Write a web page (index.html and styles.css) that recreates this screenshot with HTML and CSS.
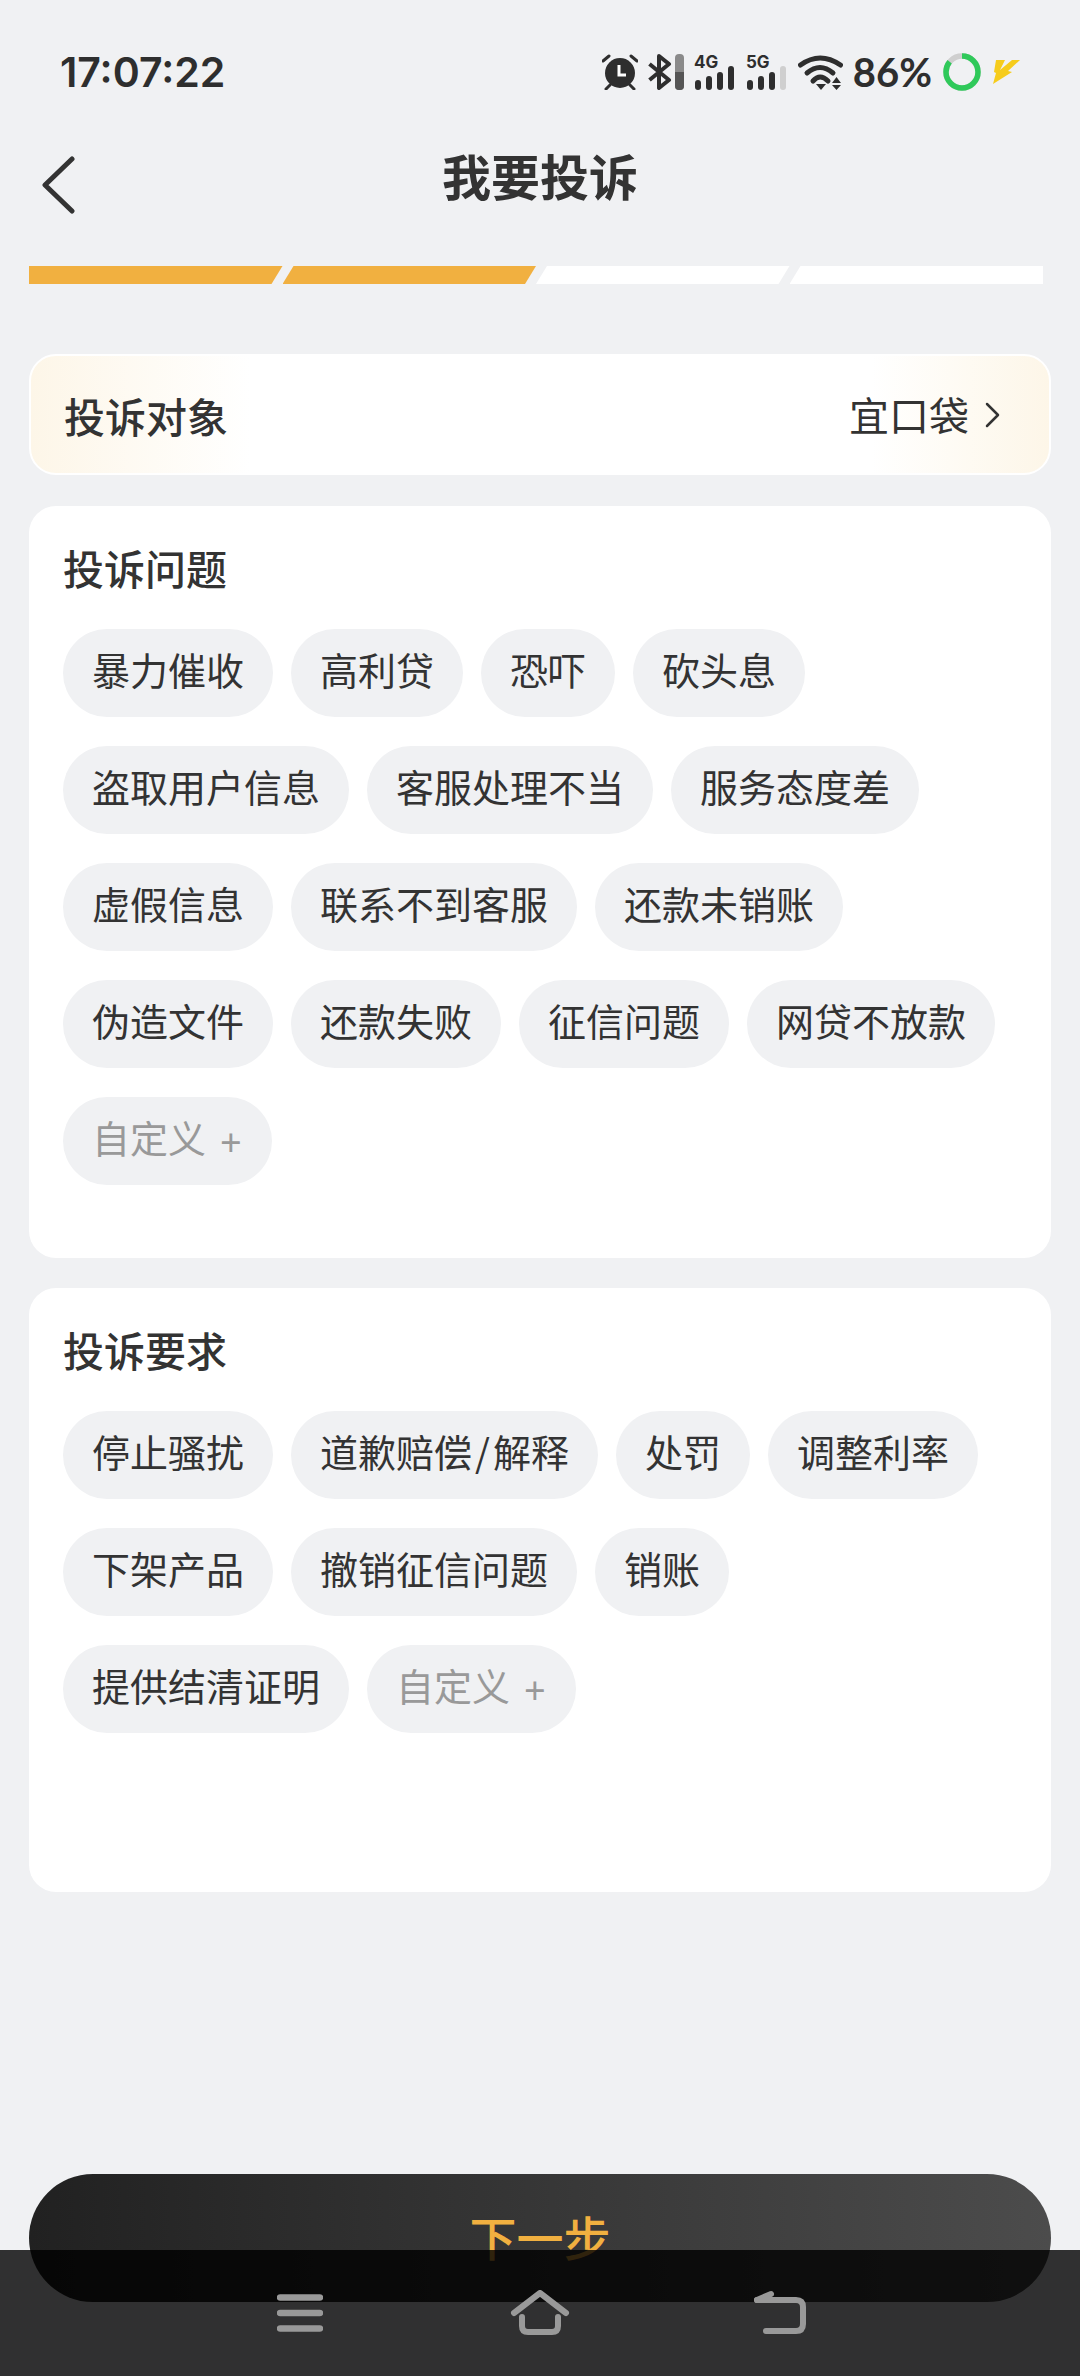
FILE: index.html
```html
<!DOCTYPE html>
<html lang="zh-CN">
<head>
    <meta charset="UTF-8">
    <meta name="viewport" content="width=device-width, initial-scale=1.0">
    <title>我要投诉</title>
    <link rel="stylesheet" href="styles.css">
</head>
<body>

<div class="page">
    <div class="status-bar">
        <span class="time">17:07:22</span>
        <div class="status-icons">
            <!-- alarm -->
            <svg class="icon-alarm" width="36" height="36" viewBox="0 0 36 36">
                <circle cx="18" cy="19" r="15" fill="#2e2e2e"/>
                <path d="M17 11v10h7" fill="none" stroke="#fff" stroke-width="3"/>
                <path d="M1 7l6-5M35 7l-6-5M4 35l4-4M32 35l-4-4" stroke="#2e2e2e" stroke-width="3" stroke-linecap="round"/>
            </svg>
            <!-- bluetooth with level bar -->
            <svg class="icon-bt" width="36" height="36" viewBox="0 0 36 36">
                <path d="M1.500 10L21 26L11 34V2L21 10L1.500 26" fill="none" stroke="#2e2e2e" stroke-width="4" stroke-linejoin="round"/>
                <rect x="27" y="0" width="9" height="36" rx="4" fill="#8a8a8a"/>
                <path d="M27 18h9v14a4 4 0 0 1-4 4h-1a4 4 0 0 1-4-4z" fill="#555"/>
            </svg>
            <!-- 4G signal -->
            <svg class="icon-signal" width="42" height="42" viewBox="0 -6 42 42">
                <text x="0" y="14" class="net-label">4G</text>
                <rect x="1" y="26" width="6" height="10" rx="3" fill="#2e2e2e"/>
                <rect x="12" y="22" width="6" height="14" rx="3" fill="#2e2e2e"/>
                <rect x="23" y="18" width="6" height="18" rx="3" fill="#2e2e2e"/>
                <rect x="34" y="12" width="6" height="24" rx="3" fill="#2e2e2e"/>
            </svg>
            <!-- 5G signal -->
            <svg class="icon-signal" width="42" height="42" viewBox="0 -6 42 42">
                <text x="0" y="14" class="net-label">5G</text>
                <rect x="1" y="26" width="6" height="10" rx="3" fill="#2e2e2e"/>
                <rect x="12" y="22" width="6" height="14" rx="3" fill="#2e2e2e"/>
                <rect x="23" y="18" width="6" height="18" rx="3" fill="#2e2e2e"/>
                <rect x="34" y="12" width="6" height="24" rx="3" fill="#cfcfcf"/>
            </svg>
            <!-- wifi -->
            <svg class="icon-wifi" width="45" height="36" viewBox="0 0 45 36">
                <path d="M2.500 11Q22-3 42.500 11" fill="none" stroke="#2e2e2e" stroke-width="5" stroke-linecap="round"/>
                <path d="M9 19Q22 8 35 19" fill="none" stroke="#2e2e2e" stroke-width="5" stroke-linecap="round"/>
                <path d="M15 27Q22 19 30 27" fill="none" stroke="#2e2e2e" stroke-width="5" stroke-linecap="round"/>
                <path d="M18 30h10l-5 6z" fill="#2e2e2e"/>
                <path d="M34 29l4.500-6 4.500 6zM34 31h9l-4.500 5z" fill="#2e2e2e"/>
            </svg>
            <span class="battery-text">86%</span>
            <!-- battery ring -->
            <svg class="icon-ring" width="38" height="38" viewBox="0 0 38 38">
                <circle cx="19" cy="19" r="16" fill="none" stroke="#cfcfcf" stroke-width="5.500"/>
                <circle cx="19" cy="19" r="16" fill="none" stroke="#2fc95a" stroke-width="5.500" pathLength="100" stroke-dasharray="86 14" transform="rotate(-90 19 19)"/>
            </svg>
            <!-- charging bolt -->
            <svg class="icon-bolt" width="30" height="26" viewBox="0 0 30 26">
                <path d="M5 1H14L9 11L21 1H29L17 12L21 13L2 25L5 14L3 13Z" fill="#f6cc1c"/>
            </svg>
        </div>
    </div>

    <div class="header">
        <svg class="back" width="34" height="58" viewBox="0 0 34 58">
            <path d="M31 3L4 29L31 55" fill="none" stroke="#333" stroke-width="5" stroke-linecap="round" stroke-linejoin="round"/>
        </svg>
        <h1>我要投诉</h1>
    </div>

    <div class="steps">
        <div class="step first done"></div>
        <div class="step done"></div>
        <div class="step"></div>
        <div class="step last"></div>
    </div>

    <div class="target-card">
        <span class="card-title">投诉对象</span>
        <div class="target-value">
            <span>宜口袋</span>
            <svg width="15" height="26" viewBox="0 0 15 26">
                <path d="M2 2L13 13L2 24" fill="none" stroke="#333" stroke-width="2.500" stroke-linecap="round" stroke-linejoin="round"/>
            </svg>
        </div>
    </div>

    <div class="card problem-card">
        <div class="card-title">投诉问题</div>
        <div class="chips">
            <span class="chip">暴力催收</span>
            <span class="chip">高利贷</span>
            <span class="chip">恐吓</span>
            <span class="chip">砍头息</span>
            <span class="chip">盗取用户信息</span>
            <span class="chip">客服处理不当</span>
            <span class="chip">服务态度差</span>
            <span class="chip">虚假信息</span>
            <span class="chip">联系不到客服</span>
            <span class="chip">还款未销账</span>
            <span class="chip">伪造文件</span>
            <span class="chip">还款失败</span>
            <span class="chip">征信问题</span>
            <span class="chip">网贷不放款</span>
            <span class="chip custom">自定义<i>+</i></span>
        </div>
    </div>

    <div class="card demand-card">
        <div class="card-title">投诉要求</div>
        <div class="chips">
            <span class="chip">停止骚扰</span>
            <span class="chip">道歉赔偿<b>/</b>解释</span>
            <span class="chip">处罚</span>
            <span class="chip">调整利率</span>
            <span class="chip">下架产品</span>
            <span class="chip">撤销征信问题</span>
            <span class="chip">销账</span>
            <span class="chip">提供结清证明</span>
            <span class="chip custom">自定义<i>+</i></span>
        </div>
    </div>

    <button class="next-btn" type="button">下一步</button>

    <div class="nav-bar">
        <svg class="nav-menu" width="46" height="38" viewBox="0 0 46 38">
            <path d="M3 3.500H43M3 19H43M3 34.500H43" stroke="#999" stroke-width="6.500" stroke-linecap="round"/>
        </svg>
        <svg class="nav-home" width="60" height="46" viewBox="0 0 60 46">
            <path d="M4 23L30 3L56 23" fill="none" stroke="#999" stroke-width="6" stroke-linecap="round" stroke-linejoin="round"/>
            <path d="M12 27V36Q12 42 18 42H42Q48 42 48 36V27" fill="none" stroke="#999" stroke-width="6" stroke-linecap="round"/>
        </svg>
        <svg class="nav-back" width="52" height="44" viewBox="0 0 52 44">
            <path d="M3 10L17 4" fill="none" stroke="#999" stroke-width="6" stroke-linecap="round"/>
            <path d="M3 10H42Q49 10 49 17V34Q49 41 42 41H12" fill="none" stroke="#999" stroke-width="6" stroke-linecap="round"/>
        </svg>
    </div>
</div>

</body>
</html>
```

FILE: styles.css
```css
* {
    box-sizing: border-box;
}
body {
    margin: 0;
    padding: 0;
    background-color: #f0f1f3;
    color: #333;
    font-family: "Noto Sans CJK SC", "Noto Sans", sans-serif;
}
.page {
    position: relative;
    width: 1080px;
    height: 2376px;
    overflow: hidden;
    padding: 0 29px;
}

/* status bar */
.status-bar {
    height: 144px;
    margin: 0 -29px;
    padding: 0 59px 0 60px;
    display: flex;
    align-items: center;
    justify-content: space-between;
}
.time {
    font-family: Inter, sans-serif;
    font-size: 41px;
    font-weight: 600;
    color: #2e2e2e;
}
.status-icons {
    display: flex;
    align-items: center;
}
.icon-bt {
    margin-left: 10px;
}
.icon-signal {
    margin-left: 10px;
    margin-top: -6px;
}
.icon-wifi {
    margin-left: 10px;
}
.net-label {
    font-family: Inter, sans-serif;
    font-size: 17px;
    font-weight: 700;
    fill: #2e2e2e;
}
.battery-text {
    margin-left: 10px;
    font-family: Lato, sans-serif;
    font-size: 40px;
    font-weight: 700;
    color: #2e2e2e;
}
.icon-ring {
    margin-left: 11px;
}
.icon-bolt {
    margin-left: 10px;
}

/* title row */
.header {
    position: relative;
    height: 68px;
    display: flex;
    align-items: center;
    justify-content: center;
}
.header h1 {
    margin: 0;
    padding-bottom: 6px;
    font-size: 49px;
    font-weight: 700;
    line-height: 62px;
    color: #333;
}
.back {
    position: absolute;
    left: 12px;
    top: 12px;
}

/* step progress */
.steps {
    margin-top: 54px;
    margin-right: 8px;
    height: 18px;
    display: flex;
}
.step {
    flex: 1;
    background-color: #fff;
    clip-path: polygon(11px 0, 100% 0, calc(100% - 11px) 100%, 0 100%);
}
.step.first {
    clip-path: polygon(0 0, 100% 0, calc(100% - 11px) 100%, 0 100%);
}
.step.last {
    clip-path: polygon(11px 0, 100% 0, 100% 100%, 0 100%);
}
.step.done {
    background-color: #f1b040;
}

/* cards */
.target-card {
    margin-top: 70px;
    height: 121px;
    padding: 0 49px 0 33px;
    display: flex;
    align-items: center;
    justify-content: space-between;
    border: 2px solid #fff;
    border-radius: 27px;
    background: linear-gradient(90deg, #fdf6e8 0, #fff 220px, #fff 840px, #fdf6e8 100%);
}
.target-value {
    display: flex;
    align-items: center;
    gap: 16px;
    font-size: 40px;
    line-height: 50px;
    color: #333;
}
.target-value span {
    padding-bottom: 2px;
}
.card-title {
    font-size: 41px;
    font-weight: 500;
    line-height: 50px;
    color: #333;
}
.card {
    background-color: #fff;
    border-radius: 27px;
    padding: 36px 34px 0;
}
.problem-card {
    margin-top: 31px;
    height: 752px;
}
.demand-card {
    margin-top: 30px;
    height: 604px;
}
.chips {
    margin-top: 37px;
    display: flex;
    flex-wrap: wrap;
    gap: 29px 18px;
}
.chip {
    height: 88px;
    padding: 0 29px 10px;
    display: flex;
    align-items: center;
    border-radius: 44px;
    background-color: #f0f1f3;
    font-size: 38px;
    color: #333;
    white-space: nowrap;
}
.chip b {
    margin: 0 3px;
    font-weight: 400;
}
.chip.custom {
    padding: 0 30px 10px 29px;
    color: #999;
}
.chip.custom i {
    margin-left: 14px;
    font-style: normal;
    font-size: 38px;
    font-family: "Noto Sans", sans-serif;
    line-height: 1;
    padding-top: 10px;
}

/* bottom button under the system nav bar */
.next-btn {
    position: absolute;
    left: 29px;
    top: 2174px;
    width: 1022px;
    height: 128px;
    padding: 0 0 6px;
    border: none;
    border-radius: 64px;
    background: linear-gradient(90deg, #212121, #4c4c4c);
    color: #f1b040;
    font-family: inherit;
    font-size: 47px;
    font-weight: 500;
}
.nav-bar {
    position: absolute;
    left: 0;
    right: 0;
    top: 2250px;
    height: 126px;
    background-color: rgba(0, 0, 0, 0.8);
}
.nav-bar svg {
    position: absolute;
}
.nav-menu {
    left: 277px;
    top: 44px;
}
.nav-home {
    left: 510px;
    top: 40px;
}
.nav-back {
    left: 754px;
    top: 40px;
}
```
